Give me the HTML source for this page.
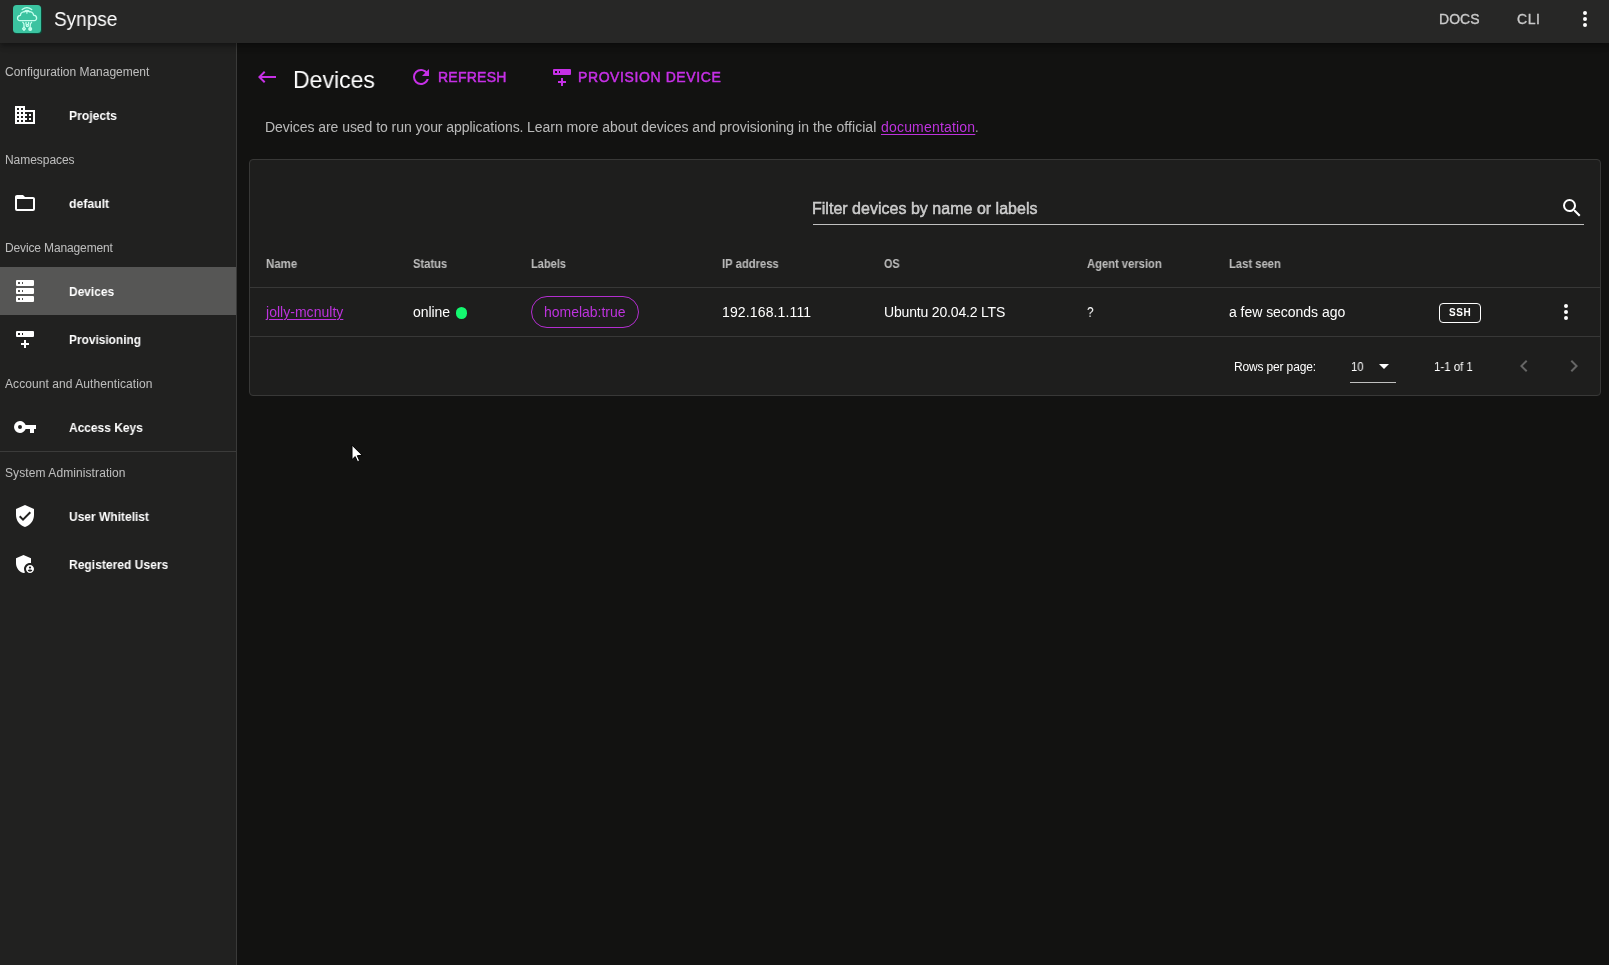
<!DOCTYPE html>
<html lang="en">
<head>
<meta charset="utf-8">
<title>Synpse - Devices</title>
<style>
*{box-sizing:border-box;margin:0;padding:0}
html,body{width:1609px;height:965px;overflow:hidden;background:#121211;font-family:"Liberation Sans",sans-serif;color:#fff}
#app{position:relative;width:1609px;height:965px;overflow:hidden;background:#121211}
.t{position:absolute;white-space:nowrap;line-height:1;display:block;transform-origin:0 50%;will-change:transform}
a.t{text-decoration:underline;text-underline-offset:2px;text-decoration-thickness:1.2px}
svg.i{position:absolute;width:24px;height:24px;fill:currentColor}
/* app bar */
.appbar{position:absolute;left:0;top:0;width:1609px;height:43px;background:#272726;z-index:5;
 box-shadow:0 2px 4px -1px rgba(0,0,0,.2),0 4px 5px 0 rgba(0,0,0,.14),0 1px 10px 0 rgba(0,0,0,.12)}
.logo{position:absolute;left:13px;top:5px;width:28px;height:28px;border-radius:3.5px;background:#3bc3a0;box-shadow:1px 1px 0 0 #0b4a38}
.logo svg{position:absolute;left:0;top:0;width:28px;height:28px}
/* drawer */
.drawer{position:absolute;left:0;top:43px;width:237px;height:922px;background:#212120;border-right:1px solid #3a3a39;z-index:2}
.drawer .active{position:absolute;left:0;top:224px;width:236px;height:48px;background:#565655}
.drawer .divider{position:absolute;left:0;top:408px;width:236px;height:1px;background:#3b3b3a}
/* main */
.card{position:absolute;left:249px;top:159px;width:1352px;height:237px;background:#1e1e1d;border:1px solid #383837;border-radius:4px}
.hr{position:absolute;height:1px;background:#383837}
.chip{position:absolute;left:531px;top:296px;width:108px;height:32px;border:1px solid #b22ecf;border-radius:16px}
.ssh{position:absolute;left:1439px;top:303px;width:42px;height:20px;border:1px solid #fff;border-radius:4px}
.dot{position:absolute;left:456px;top:307.4px;width:11.4px;height:11.4px;border-radius:50%;background:#14f870}
.uline{position:absolute;height:1px;background:rgba(255,255,255,.72)}
</style>
</head>
<body>
<div id="app">

<header class="appbar">
  <div class="logo">
    <svg viewBox="0 0 28 28" fill="none" stroke="#c6ffee" stroke-width="1.3" stroke-linecap="round" stroke-linejoin="round">
      <path d="M9.2 4.6 Q13.9 0.6 18.7 4.6" />
      <path d="M11.2 6.7 Q13.9 4.3 16.7 6.7" />
      <circle cx="13.9" cy="7.9" r="0.8" fill="#c6ffee" stroke="none"/>
      <path d="M6.8 15.6 C3.8 15.6 3.6 10.8 7.4 10.4 C7.6 5.2 20.2 5.2 20.6 10.2 C24.600 10.6 24.4 15.6 21.2 15.6 Z"/>
      <path d="M9.8 17.3 C11.8 18.8 10.9 21 11 22.2"/>
      <path d="M18.6 17.3 C16.6 18.800 17.2 21 17.2 22.2"/>
      <path d="M13 17.3 V19 M15.6 17.3 V19"/>
      <circle cx="14.3" cy="20.5" r="1.1"/>
      <path d="M11 22.3 L12.4 23.8 L11 25.3 L9.6 23.8 Z"/>
      <circle cx="17.2" cy="24" r="1.4" fill="#c6ffee"/>
    </svg>
  </div>
  <span class="t" style="font-size:20px;font-weight:400;color:#ffffff;transform:scaleX(0.9507);left:53.70px;top:9.00px">Synpse</span>
  <span class="t" style="font-size:14px;font-weight:400;color:#c9c9c9;-webkit-text-stroke:0.35px currentColor;letter-spacing:0.030px;left:1438.90px;top:12.00px">DOCS</span>
  <span class="t" style="font-size:14px;font-weight:400;color:#c9c9c9;-webkit-text-stroke:0.35px currentColor;letter-spacing:0.602px;left:1517.30px;top:12.00px">CLI</span>
  <svg class="i" style="left:1573px;top:7px;color:#fff" viewBox="0 0 24 24"><path d="M12,16A2,2 0 0,1 14,18A2,2 0 0,1 12,20A2,2 0 0,1 10,18A2,2 0 0,1 12,16M12,10A2,2 0 0,1 14,12A2,2 0 0,1 12,14A2,2 0 0,1 10,12A2,2 0 0,1 12,10M12,4A2,2 0 0,1 14,6A2,2 0 0,1 12,8A2,2 0 0,1 10,6A2,2 0 0,1 12,4Z"/></svg>
</header>

<nav class="drawer">
  <div class="active"></div>
  <div class="divider"></div>
</nav>
<div id="navtext" style="position:absolute;left:0;top:0;z-index:3">
  <span class="t" style="font-size:12px;font-weight:400;color:rgba(255,255,255,.7);letter-spacing:-0.018px;left:5.40px;top:66.00px">Configuration Management</span>
  <svg class="i" style="left:13px;top:103px" viewBox="0 0 24 24"><path d="M18,15H16V17H18M18,11H16V13H18M20,19H12V17H14V15H12V13H14V11H12V9H20M10,7H8V5H10M10,11H8V9H10M10,15H8V13H10M10,19H8V17H10M6,7H4V5H6M6,11H4V9H6M6,15H4V13H6M6,19H4V17H6M12,7V3H2V21H22V7H12Z"/></svg>
  <span class="t" style="font-size:13px;font-weight:700;color:#ffffff;transform:scaleX(0.9340);left:69.40px;top:109.00px">Projects</span>
  <span class="t" style="font-size:12px;font-weight:400;color:rgba(255,255,255,.7);letter-spacing:-0.048px;left:5.40px;top:154.00px">Namespaces</span>
  <svg class="i" style="left:13px;top:191px" viewBox="0 0 24 24"><path d="M20,18H4V8H20M20,6H12L10,4H4C2.89,4 2,4.89 2,6V18A2,2 0 0,0 4,20H20A2,2 0 0,0 22,18V8C22,6.89 21.1,6 20,6Z"/></svg>
  <span class="t" style="font-size:13px;font-weight:700;color:#ffffff;transform:scaleX(0.9403);left:69.30px;top:197.00px">default</span>
  <span class="t" style="font-size:12px;font-weight:400;color:rgba(255,255,255,.7);letter-spacing:-0.133px;left:5.40px;top:242.00px">Device Management</span>
  <svg class="i" style="left:13px;top:279px" viewBox="0 0 24 24"><path d="M4,1H20A1,1 0 0,1 21,2V6A1,1 0 0,1 20,7H4A1,1 0 0,1 3,6V2A1,1 0 0,1 4,1M4,9H20A1,1 0 0,1 21,10V14A1,1 0 0,1 20,15H4A1,1 0 0,1 3,14V10A1,1 0 0,1 4,9M4,17H20A1,1 0 0,1 21,18V22A1,1 0 0,1 20,23H4A1,1 0 0,1 3,22V18A1,1 0 0,1 4,17M9,5H10V3H9V5M9,13H10V11H9V13M9,21H10V19H9V21M5,3V5H7V3H5M5,11V13H7V11H5M5,19V21H7V19H5Z"/></svg>
  <span class="t" style="font-size:13px;font-weight:700;color:#ffffff;transform:scaleX(0.9178);left:69.40px;top:285.00px">Devices</span>
  <svg class="i" style="left:13px;top:327px" viewBox="0 0 24 24"><path d="M4,4H20A1,1 0 0,1 21,5V9A1,1 0 0,1 20,10H4A1,1 0 0,1 3,9V5A1,1 0 0,1 4,4M9,8H10V6H9V8M5,6V8H7V6H5M8,16H11V13H13V16H16V18H13V21H11V18H8V16Z"/></svg>
  <span class="t" style="font-size:13px;font-weight:700;color:#ffffff;transform:scaleX(0.9151);left:69.20px;top:333.00px">Provisioning</span>
  <span class="t" style="font-size:12px;font-weight:400;color:rgba(255,255,255,.7);letter-spacing:0.075px;left:5.40px;top:378.00px">Account and Authentication</span>
  <svg class="i" style="left:13px;top:415px" viewBox="0 0 24 24"><path d="M7,14A2,2 0 0,1 5,12A2,2 0 0,1 7,10A2,2 0 0,1 9,12A2,2 0 0,1 7,14M12.65,10C11.83,7.67 9.61,6 7,6A6,6 0 0,0 1,12A6,6 0 0,0 7,18C9.61,18 11.83,16.33 12.65,14H17V18H21V14H23V10H12.65Z"/></svg>
  <span class="t" style="font-size:13px;font-weight:700;color:#ffffff;transform:scaleX(0.9200);left:69.20px;top:421.00px">Access Keys</span>
  <span class="t" style="font-size:12px;font-weight:400;color:rgba(255,255,255,.7);letter-spacing:0.090px;left:5.40px;top:467.00px">System Administration</span>
  <svg class="i" style="left:13px;top:504px" viewBox="0 0 24 24"><path d="M10,17L6,13L7.41,11.59L10,14.17L16.59,7.58L18,9M12,1L3,5V11C3,16.55 6.84,21.74 12,23C17.16,21.74 21,16.55 21,11V5L12,1Z"/></svg>
  <span class="t" style="font-size:13px;font-weight:700;color:#ffffff;transform:scaleX(0.9227);left:69.20px;top:510.00px">User Whitelist</span>
  <svg class="i" style="left:13px;top:552px" viewBox="0 0 24 24"><path d="M17,11c0.34,0,0.67,0.04,1,0.09V6.27L10.5,3L3,6.27v4.91c0,4.54,3.2,8.79,7.5,9.82c0.55-0.13,1.08-0.32,1.6-0.55C11.41,19.47,11,18.28,11,17C11,13.69,13.69,11,17,11z M17,13c-2.21,0-4,1.79-4,4c0,2.21,1.79,4,4,4s4-1.79,4-4C21,14.79,19.21,13,17,13z M17,14.38c0.62,0,1.12,0.51,1.12,1.12s-0.51,1.12-1.12,1.12s-1.12-0.51-1.12-1.12S16.38,14.38,17,14.38z M17,19.75c-0.93,0-1.74-0.46-2.24-1.17c0.05-0.72,1.51-1.08,2.24-1.08s2.19,0.36,2.24,1.08C18.74,19.29,17.93,19.75,17,19.75z"/></svg>
  <span class="t" style="font-size:13px;font-weight:700;color:#ffffff;transform:scaleX(0.9278);left:69.20px;top:558.00px">Registered Users</span>
</div>

<main>
  <svg class="i" style="left:254.5px;top:64.5px;color:#c630e6" viewBox="0 0 24 24"><path d="M21,11H6.83L10.41,7.41L9,6L3,12L9,18L10.41,16.58L6.83,13H21V11Z"/></svg>
  <h1 class="t" style="font-size:24px;font-weight:400;color:#ffffff;transform:scaleX(0.9602);left:292.54px;top:68.00px">Devices</h1>
  <svg class="i" style="left:408.5px;top:64.5px;color:#c630e6" viewBox="0 0 24 24"><path d="M17.65,6.35C16.2,4.9 14.21,4 12,4A8,8 0 0,0 4,12A8,8 0 0,0 12,20C15.73,20 18.84,17.45 19.73,14H17.65C16.83,16.33 14.61,18 12,18A6,6 0 0,1 6,12A6,6 0 0,1 12,6C13.66,6 15.14,6.69 16.22,7.78L13,11H20V4L17.65,6.35Z"/></svg>
  <span class="t" style="font-size:14px;font-weight:400;color:#c630e6;-webkit-text-stroke:0.5px currentColor;letter-spacing:0.236px;left:437.60px;top:70.00px">REFRESH</span>
  <svg class="i" style="left:550px;top:65px;color:#c630e6" viewBox="0 0 24 24"><path d="M4,4H20A1,1 0 0,1 21,5V9A1,1 0 0,1 20,10H4A1,1 0 0,1 3,9V5A1,1 0 0,1 4,4M9,8H10V6H9V8M5,6V8H7V6H5M8,16H11V13H13V16H16V18H13V21H11V18H8V16Z"/></svg>
  <span class="t" style="font-size:14px;font-weight:400;color:#c630e6;-webkit-text-stroke:0.5px currentColor;letter-spacing:0.595px;left:578.30px;top:70.00px">PROVISION DEVICE</span>
  <p><span class="t" style="font-size:14px;font-weight:400;color:rgba(255,255,255,.7);letter-spacing:-0.054px;left:265.00px;top:120.00px">Devices are used to run your applications.</span> <span class="t" style="font-size:14px;font-weight:400;color:rgba(255,255,255,.7);letter-spacing:-0.016px;left:526.80px;top:120.00px">Learn more about devices and provisioning</span> <span class="t" style="font-size:14px;font-weight:400;color:rgba(255,255,255,.7);letter-spacing:0.053px;left:798.00px;top:120.00px">in the official</span>
  <a class="t" style="font-size:14px;font-weight:400;color:#bd33dd;letter-spacing:0.187px;left:881.10px;top:120.00px">documentation</a>
  <span class="t" style="font-size:14px;font-weight:400;color:rgba(255,255,255,.7);transform:scaleX(0.8500);left:974.75px;top:120.00px">.</span></p>

  <section class="card"></section>
  <span class="t" style="font-size:16px;font-weight:400;color:rgba(255,255,255,.7);-webkit-text-stroke:0.45px currentColor;letter-spacing:0.017px;left:811.70px;top:201.00px">Filter devices by name or labels</span>
  <div class="uline" style="left:812.6px;top:224px;width:771.6px"></div>
  <svg class="i" style="left:1560px;top:196px;color:#fff" viewBox="0 0 24 24"><path d="M9.5,3A6.5,6.5 0 0,1 16,9.500C16,11.11 15.41,12.59 14.44,13.73L14.71,14H15.5L20.5,19L19,20.5L14,15.5V14.71L13.73,14.44C12.59,15.41 11.11,16 9.5,16A6.5,6.5 0 0,1 3,9.5A6.5,6.5 0 0,1 9.5,3M9.5,5C7,5 5,7 5,9.5C5,12 7,14 9.5,14C12,14 14,12 14,9.5C14,7 12,5 9.500,5Z"/></svg>

  <span class="t" style="font-size:12px;font-weight:700;color:rgba(255,255,255,.7);transform:scaleX(0.9543);left:266.20px;top:258.00px">Name</span>
  <span class="t" style="font-size:12px;font-weight:700;color:rgba(255,255,255,.7);transform:scaleX(0.9297);left:412.80px;top:258.00px">Status</span>
  <span class="t" style="font-size:12px;font-weight:700;color:rgba(255,255,255,.7);transform:scaleX(0.9207);left:531.00px;top:258.00px">Labels</span>
  <span class="t" style="font-size:12px;font-weight:700;color:rgba(255,255,255,.7);transform:scaleX(0.9373);left:722.40px;top:258.00px">IP address</span>
  <span class="t" style="font-size:12px;font-weight:700;color:rgba(255,255,255,.7);transform:scaleX(0.9057);left:884.00px;top:258.00px">OS</span>
  <span class="t" style="font-size:12px;font-weight:700;color:rgba(255,255,255,.7);transform:scaleX(0.9337);left:1086.90px;top:258.00px">Agent version</span>
  <span class="t" style="font-size:12px;font-weight:700;color:rgba(255,255,255,.7);transform:scaleX(0.9359);left:1229.20px;top:258.00px">Last seen</span>
  <div class="hr" style="left:250px;top:287px;width:1350px"></div>

  <a class="t" style="font-size:14px;font-weight:400;color:#bd33dd;letter-spacing:0.024px;left:266.10px;top:305.00px">jolly-mcnulty</a>
  <span class="t" style="font-size:14px;font-weight:400;color:#ffffff;letter-spacing:-0.076px;left:412.90px;top:305.00px">online</span>
  <div class="dot"></div>
  <div class="chip"></div>
  <span class="t" style="font-size:14px;font-weight:400;color:#bd33dd;letter-spacing:-0.012px;left:544.20px;top:305.00px">homelab:true</span>
  <span class="t" style="font-size:14px;font-weight:400;color:#ffffff;letter-spacing:0.136px;left:721.90px;top:305.00px">192.168.1.111</span>
  <span class="t" style="font-size:14px;font-weight:400;color:#ffffff;letter-spacing:-0.173px;left:883.60px;top:305.00px">Ubuntu 20.04.2 LTS</span>
  <span class="t" style="font-size:14px;font-weight:400;color:#ffffff;transform:scaleX(0.8250);left:1087.00px;top:305.00px">?</span>
  <span class="t" style="font-size:14px;font-weight:400;color:#ffffff;letter-spacing:-0.035px;left:1229.20px;top:305.00px">a few seconds ago</span>
  <div class="ssh"></div>
  <span class="t" style="font-size:10px;font-weight:700;color:#ffffff;letter-spacing:0.580px;left:1449.40px;top:308.00px">SSH</span>
  <svg class="i" style="left:1554px;top:300px;color:#fff" viewBox="0 0 24 24"><path d="M12,16A2,2 0 0,1 14,18A2,2 0 0,1 12,20A2,2 0 0,1 10,18A2,2 0 0,1 12,16M12,10A2,2 0 0,1 14,12A2,2 0 0,1 12,14A2,2 0 0,1 10,12A2,2 0 0,1 12,10M12,4A2,2 0 0,1 14,6A2,2 0 0,1 12,8A2,2 0 0,1 10,6A2,2 0 0,1 12,4Z"/></svg>
  <div class="hr" style="left:250px;top:336px;width:1350px"></div>

  <span class="t" style="font-size:12px;font-weight:400;color:#ffffff;letter-spacing:-0.155px;left:1233.90px;top:361.00px">Rows per page:</span>
  <span class="t" style="font-size:12px;font-weight:400;color:#ffffff;transform:scaleX(0.9361);left:1350.60px;top:361.00px">10</span>
  <svg class="i" style="left:1371.5px;top:354px;color:#fff" viewBox="0 0 24 24"><path d="M7,10L12,15L17,10H7Z"/></svg>
  <div class="uline" style="left:1350px;top:382px;width:46px"></div>
  <span class="t" style="font-size:12px;font-weight:400;color:#ffffff;transform:scaleX(0.9532);left:1434.00px;top:361.00px">1-1 of 1</span>
  <svg class="i" style="left:1512px;top:354px;color:#666665" viewBox="0 0 24 24"><path d="M15.41,16.58L10.83,12L15.41,7.41L14,6L8,12L14,18L15.41,16.580Z"/></svg>
  <svg class="i" style="left:1562px;top:354px;color:#666665" viewBox="0 0 24 24"><path d="M8.59,16.58L13.17,12L8.59,7.41L10,6L16,12L10,18L8.59,16.58Z"/></svg>

  <svg style="position:absolute;left:349px;top:443px;width:16px;height:22px;z-index:9" viewBox="0 0 16 22"><path d="M3 2.2 V16.6 L6.2 13.600 L8.5 18.7 L10.6 17.7 L8.3 12.7 L13.2 12.3 Z" fill="#fff" stroke="#000" stroke-width="1" stroke-linejoin="miter"/></svg>
</main>

</div>
</body>
</html>
